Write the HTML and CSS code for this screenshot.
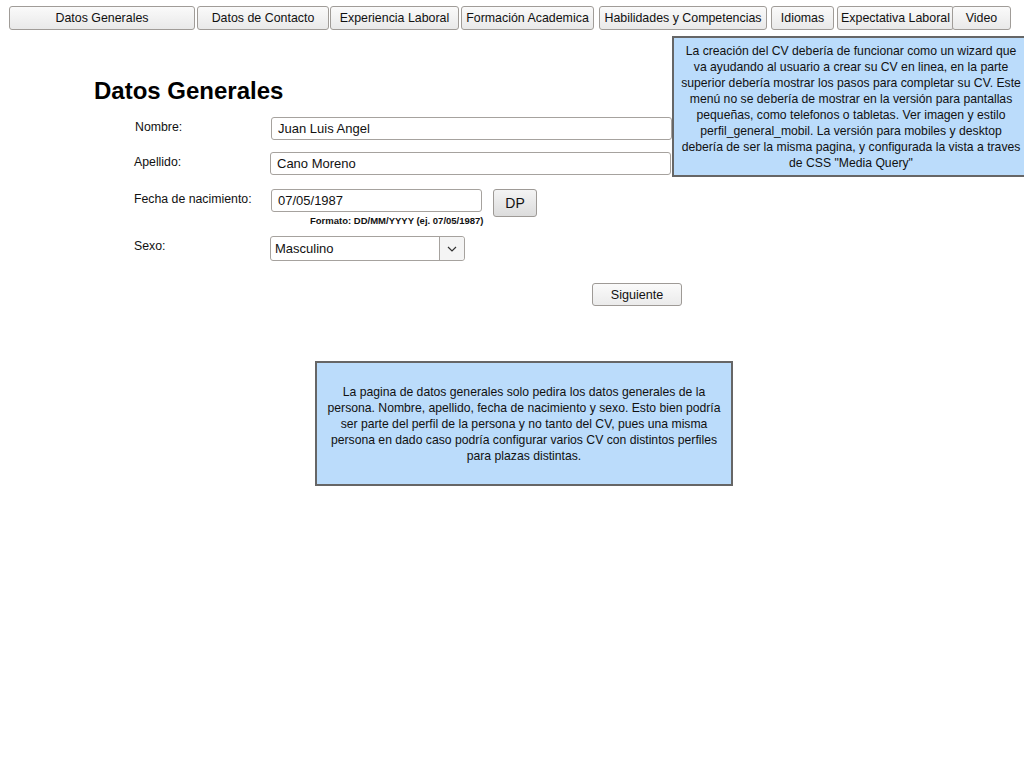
FILE: index.html
```html
<!DOCTYPE html>
<html lang="es">
<head>
<meta charset="utf-8">
<title>Datos Generales</title>
<link rel="stylesheet" href="styles.css">
</head>
<body>
<nav class="tabs">
  <button class="tab tab-general">Datos Generales</button>
  <button class="tab tab-contacto">Datos de Contacto</button>
  <button class="tab tab-experiencia">Experiencia Laboral</button>
  <button class="tab tab-formacion">Formación Academica</button>
  <button class="tab tab-habilidades">Habilidades y Competencias</button>
  <button class="tab tab-idiomas">Idiomas</button>
  <button class="tab tab-expectativa">Expectativa Laboral</button>
  <button class="tab tab-video">Video</button>
</nav>

<main class="page">
  <h1 class="title">Datos Generales</h1>
  <form class="form">
    <div class="row row-nombre">
      <label class="label">Nombre:</label>
      <div class="field input input-wide">Juan Luis Angel</div>
    </div>
    <div class="row row-apellido">
      <label class="label label-shift">Apellido:</label>
      <div class="field input input-wide input-shift">Cano Moreno</div>
    </div>
    <div class="row row-fecha">
      <label class="label label-shift">Fecha de nacimiento:</label>
      <div class="date-group">
        <div class="date-line">
          <div class="field input input-date">07/05/1987</div>
          <button type="button" class="btn btn-dp">DP</button>
        </div>
        <div class="hint">Formato: DD/MM/YYYY (ej. 07/05/1987)</div>
      </div>
    </div>
    <div class="row row-sexo">
      <label class="label label-shift">Sexo:</label>
      <div class="select input-shift">
        <span class="select-value">Masculino</span>
        <span class="select-arrow">
          <svg width="10" height="6" viewBox="0 0 10 6"><path d="M1 1 L5 5 L9 1" fill="none" stroke="#333" stroke-width="1.2"/></svg>
        </span>
      </div>
    </div>
    <div class="actions">
      <button type="button" class="btn btn-next">Siguiente</button>
    </div>
  </form>
</main>

<aside class="note note-top">La creación del CV debería de funcionar como un wizard que<br>va ayudando al usuario a crear su CV en linea, en la parte<br>superior debería mostrar los pasos para completar su CV. Este<br>menú no se debería de mostrar en la versión para pantallas<br>pequeñas, como telefonos o tabletas. Ver imagen y estilo<br>perfil_general_mobil. La versión para mobiles y desktop<br>debería de ser la misma pagina, y configurada la vista a traves<br>de CSS "Media Query"</aside>

<aside class="note note-bottom">La pagina de datos generales solo pedira los datos generales de la<br>persona. Nombre, apellido, fecha de nacimiento y sexo. Esto bien podría<br>ser parte del perfil de la persona y no tanto del CV, pues una misma<br>persona en dado caso podría configurar varios CV con distintos perfiles<br>para plazas distintas.</aside>
</body>
</html>
```

FILE: styles.css
```css
html, body {
  margin: 0;
  padding: 0;
  background: #ffffff;
  font-family: "Liberation Sans", Arial, sans-serif;
  color: #000;
}

body {
  position: relative;
  width: 1024px;
  height: 768px;
  overflow: hidden;
}

.tabs {
  display: flex;
  padding: 6px 0 0 9px;
  height: 23px;
}

.tab {
  box-sizing: border-box;
  height: 24px;
  margin: 0;
  padding: 0;
  border: 1px solid #a09c98;
  border-radius: 3px;
  background: linear-gradient(#fafafa, #e9e9e9);
  font-family: "Liberation Sans", Arial, sans-serif;
  font-size: 12.4px;
  color: #111;
  white-space: nowrap;
  text-align: center;
}

.tab-general { width: 186px; }
.tab-contacto { width: 132px; margin-left: 2px; }
.tab-experiencia { width: 129px; margin-left: 1px; }
.tab-formacion { width: 133px; margin-left: 2px; }
.tab-habilidades { width: 168px; margin-left: 5px; }
.tab-idiomas { width: 63px; margin-left: 4px; }
.tab-expectativa { width: 117px; margin-left: 3px; }
.tab-video { width: 59px; margin-left: -2px; }

.page {
  padding: 48px 0 0 94px;
}

.title {
  margin: 0;
  font-size: 24px;
  font-weight: bold;
  line-height: 28px;
}

.form {
  margin: 12px 0 0 0;
  padding-left: 41px;
}

.row {
  display: flex;
  align-items: flex-start;
}

.row-nombre { height: 35px; }
.row-apellido { height: 37px; }
.row-fecha { height: 47px; }
.row-sexo { height: 47px; }

.label {
  width: 136px;
  font-size: 12.3px;
  line-height: 14px;
  padding-top: 3px;
  color: #111;
}

.label-shift { margin-left: -1px; margin-right: 1px; }

.input {
  box-sizing: border-box;
  height: 23px;
  border: 1px solid #a6a29e;
  border-radius: 3px;
  background: #fff;
  font-size: 13px;
  line-height: 21px;
  padding-left: 6px;
  color: #111;
}

.input-wide { width: 401px; }
.input-shift { margin-left: -1px; }

.date-group {
  display: flex;
  flex-direction: column;
}

.date-line {
  display: flex;
  align-items: flex-start;
}

.input-date { width: 211px; }

.btn {
  box-sizing: border-box;
  border: 1px solid #9e9a96;
  border-radius: 3px;
  background: linear-gradient(#f4f4f4, #dcdcdc);
  font-family: "Liberation Sans", Arial, sans-serif;
  color: #111;
  padding: 0;
}

.btn-dp {
  width: 44px;
  height: 28px;
  margin-left: 11px;
  font-size: 14px;
}

.hint {
  font-size: 9.5px;
  font-weight: bold;
  line-height: 11px;
  margin: -2px 0 0 39px;
  color: #111;
}

.select {
  box-sizing: border-box;
  width: 195px;
  height: 25px;
  display: flex;
  border: 1px solid #a6a29e;
  border-radius: 3px;
  background: #fff;
}

.select-value {
  flex: 1;
  font-size: 13px;
  line-height: 23px;
  padding-left: 4px;
  color: #111;
}

.select-arrow {
  width: 24px;
  display: flex;
  align-items: center;
  justify-content: center;
  border-left: 1px solid #a6a29e;
  background: #f4f4f4;
  border-radius: 0 3px 3px 0;
}

.actions {
  padding-left: 457px;
  margin-top: 0;
}

.btn-next {
  width: 90px;
  height: 23px;
  font-size: 12.6px;
  background: linear-gradient(#fafafa, #ebebeb);
}

.note {
  position: absolute;
  box-sizing: border-box;
  background: #bbdcfb;
  border: 2px solid #666;
  font-size: 12.2px;
  line-height: 16px;
  text-align: center;
  white-space: nowrap;
  color: #111;
}

.note-top {
  left: 672px;
  top: 36px;
  width: 358px;
  height: 141px;
  padding: 5px 0 0 0;
}

.note-bottom {
  left: 315px;
  top: 361px;
  width: 418px;
  height: 125px;
  padding: 21px 0 0 0;
}
```
